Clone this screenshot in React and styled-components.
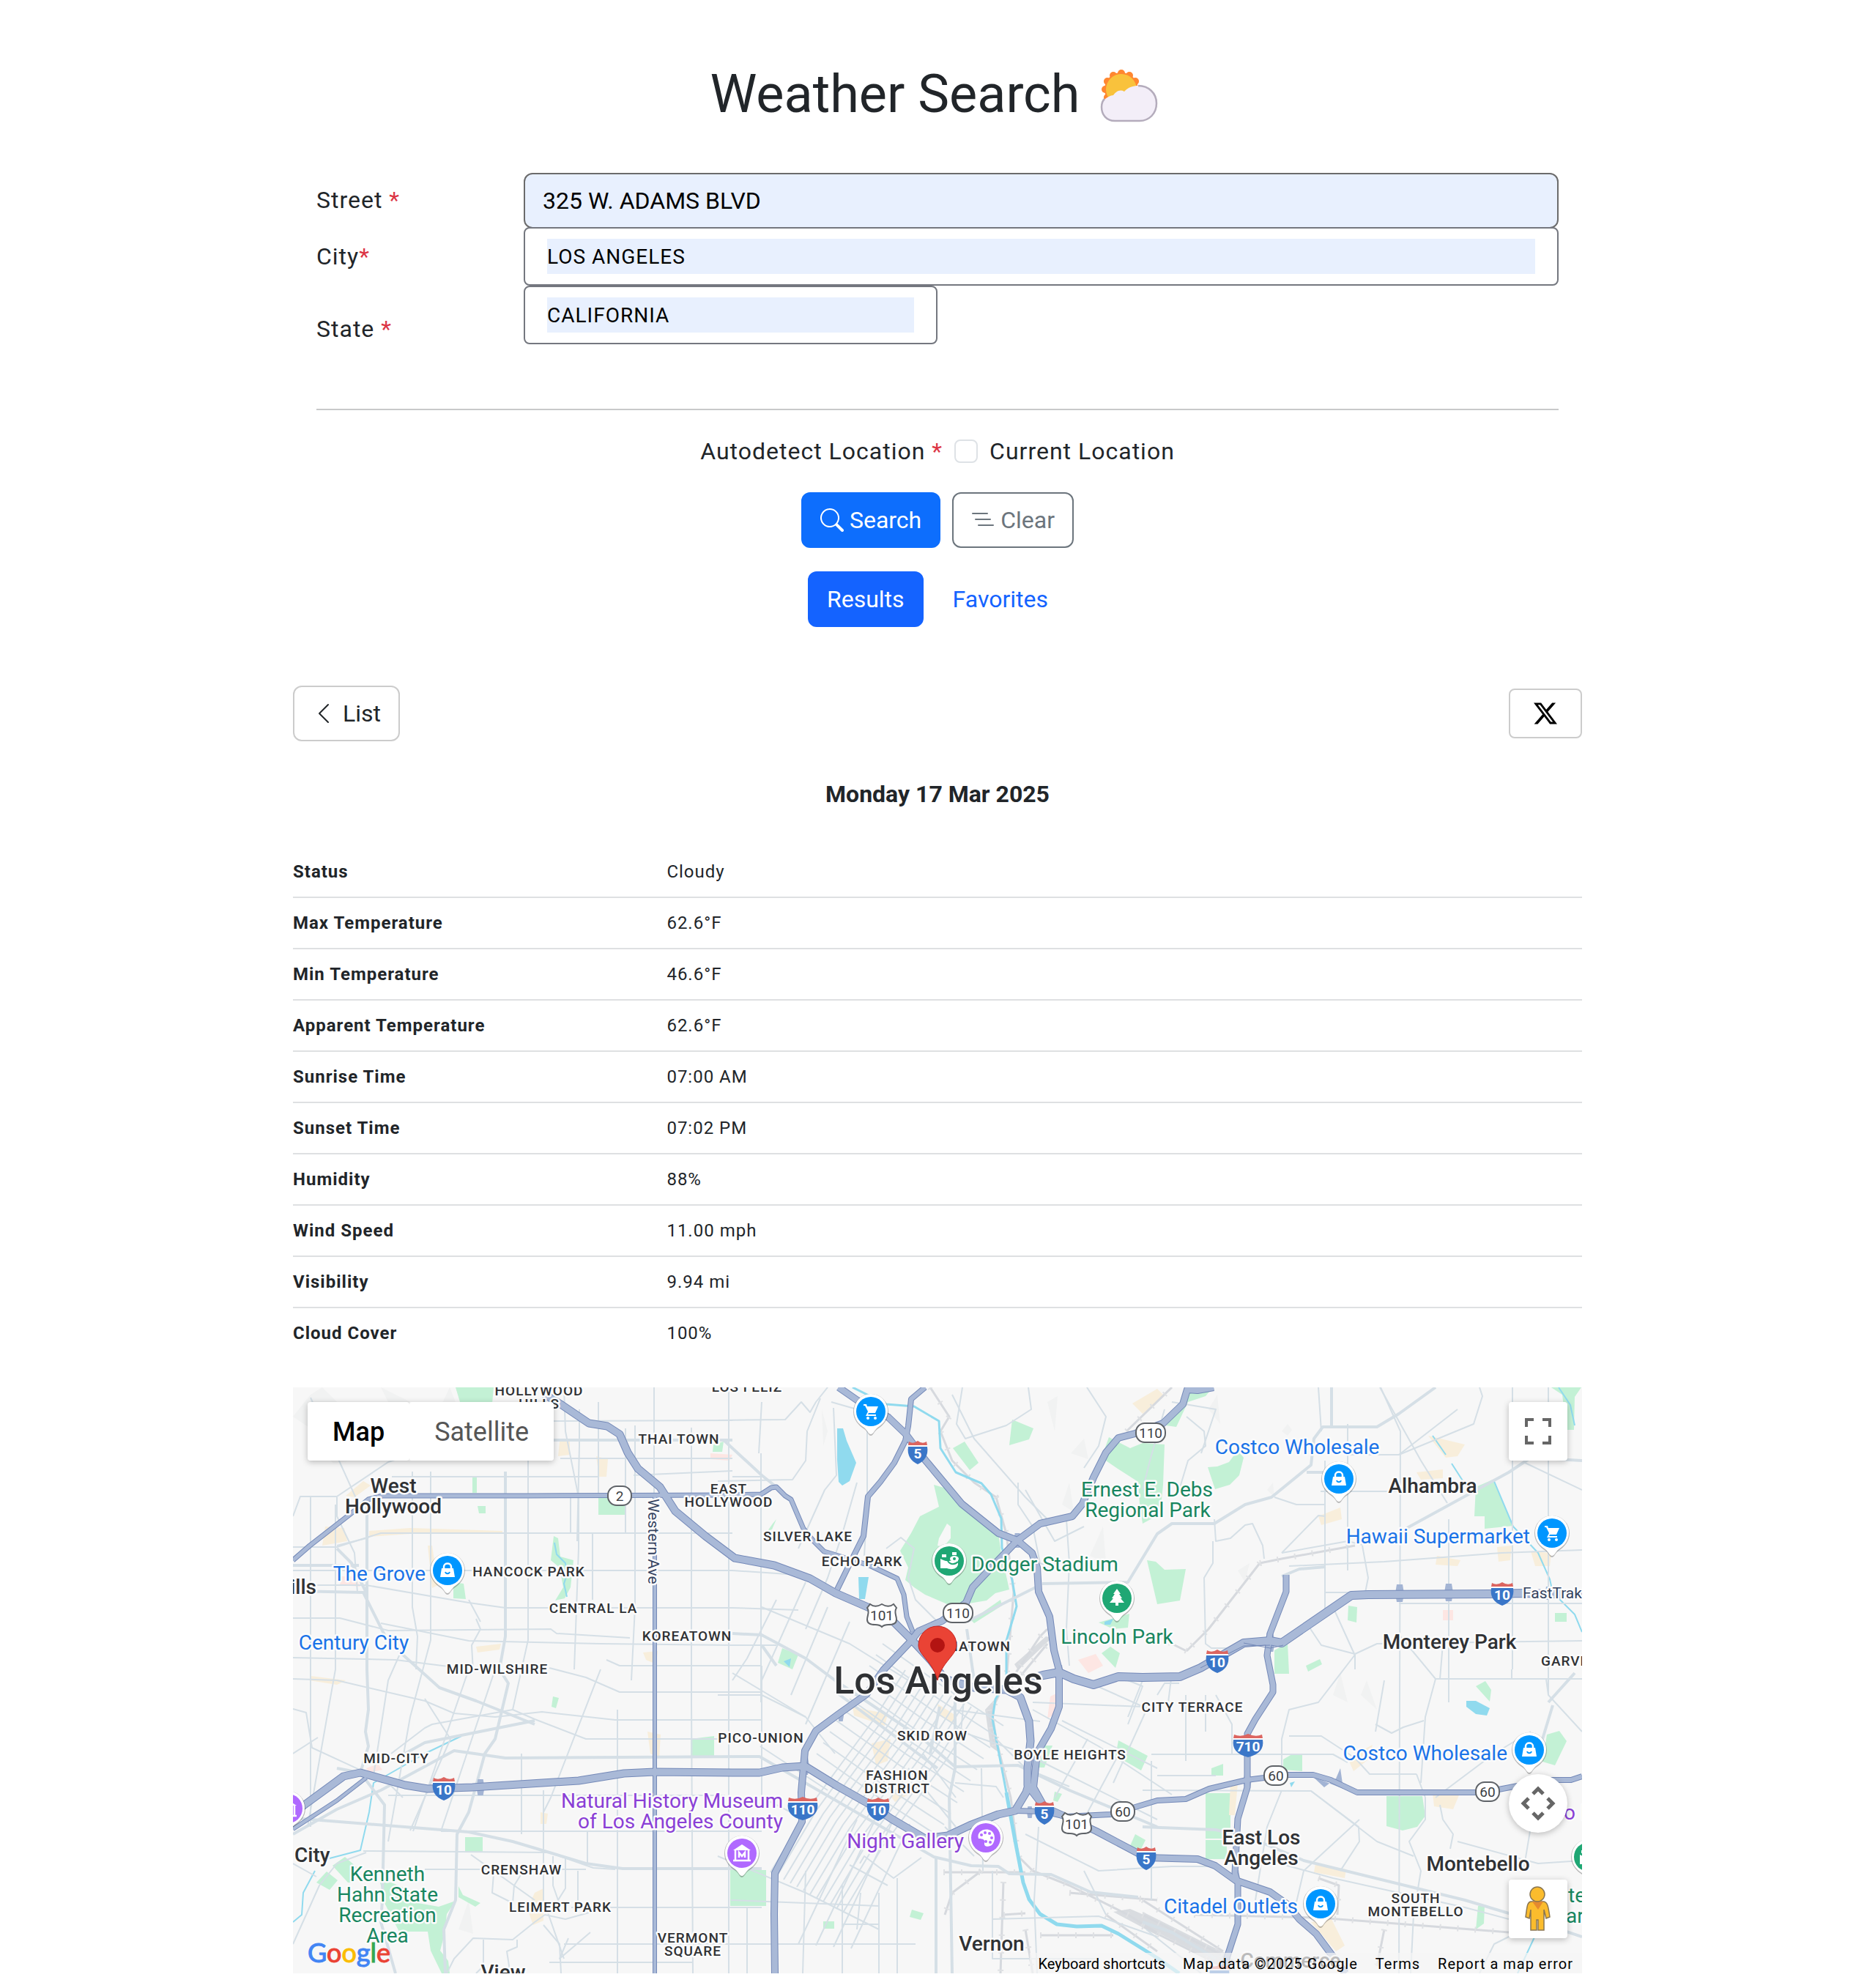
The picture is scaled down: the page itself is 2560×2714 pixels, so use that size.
import React from "react";
import styled, { createGlobalStyle } from "styled-components";
import { BsSearch, BsListNested, BsChevronLeft, BsTwitterX } from "react-icons/bs";

const GlobalStyle = createGlobalStyle`
  *, *::before, *::after { box-sizing: border-box; }
  body {
    margin: 0;
    background: #fff;
    color: #212529;
    font-family: Roboto, "Liberation Sans", sans-serif;
    font-size: 32px;
    line-height: 48px;
  }
  input, button { font-family: inherit; }
`;

const Page = styled.main`
  max-width: 1760px;
  margin: 0 auto;
  padding: 86px 0 20px;
`;

const Title = styled.h1`
  display: flex;
  align-items: center;
  justify-content: center;
  gap: 28px;
  margin: 0 0 64px;
  font-size: 72px;
  line-height: 86px;
  font-weight: 400;
`;

const Form = styled.form`
  padding: 0 32px;
`;

const FieldRow = styled.div`
  display: grid;
  grid-template-columns: 283px 1fr;
  align-items: center;
  min-height: ${(p) => p.$height};
`;

const FieldLabel = styled.label`
  letter-spacing: 1px;
`;

const Star = styled.span`
  color: #dc3545;
`;

const StreetInput = styled.input`
  width: 100%;
  height: 76px;
  margin-bottom: -2px;
  padding: 0 24px;
  border: 2px solid #6b6b6b;
  border-radius: 12px;
  background: #e8f0fe;
  color: #000;
  font-size: 32px;
  line-height: 48px;
`;

const Outline = styled.div`
  align-self: start;
  position: relative;
  width: ${(p) => p.$width};
  padding: 14px 30px;
  border: 2px solid #74777f;
  border-radius: 8px;
  background: #fff;
`;

const OutlineInput = styled.input`
  display: block;
  width: 100%;
  height: 48px;
  padding: 0;
  border: 0;
  background: #e8f0fe;
  color: #000;
  font-size: 28px;
  letter-spacing: 1px;
`;

const Divider = styled.hr`
  margin: 50px 0 32px;
  border: 0;
  border-top: 2px solid #c8c9ca;
`;

const CenterRow = styled.div`
  display: flex;
  align-items: center;
  justify-content: center;
  gap: ${(p) => p.$gap};
  margin-bottom: ${(p) => p.$after};
`;

const Check = styled.input`
  appearance: none;
  width: 32px;
  height: 32px;
  margin: 0;
  border: 2px solid #dee2e6;
  border-radius: 8px;
  background: #fff;
`;

const tones = {
  primary: { back: "#0d6efd", edge: "#0d6efd", text: "#fff", gap: "8px" },
  outline: { back: "#fff", edge: "#6c757d", text: "#6c757d", gap: "8px" },
  active: { back: "#1463ff", edge: "#1463ff", text: "#fff", gap: "8px" },
  link: { back: "transparent", edge: "transparent", text: "#1463ff", gap: "8px" },
  light: { back: "#fff", edge: "#ccc", text: "#212529", gap: "10px" },
};

const Button = styled.button`
  display: inline-flex;
  align-items: center;
  gap: ${(p) => tones[p.$tone].gap};
  height: 76px;
  padding: 0 24px;
  border: 2px solid ${(p) => tones[p.$tone].edge};
  border-radius: 12px;
  background: ${(p) => tones[p.$tone].back};
  color: ${(p) => tones[p.$tone].text};
  font-size: 32px;
  line-height: 48px;
`;

const DetailBar = styled.div`
  display: flex;
  align-items: center;
  justify-content: space-between;
`;

const ShareLink = styled.a`
  display: flex;
  align-items: center;
  justify-content: center;
  width: 100px;
  height: 68px;
  border: 2px solid #ccc;
  border-radius: 8px;
  color: #000;
`;

const DateHeading = styled.h2`
  margin: 48px 0;
  font-size: 32px;
  line-height: 48px;
  font-weight: 700;
  text-align: center;
`;

const Table = styled.table`
  width: 100%;
  margin-bottom: 38px;
  border-collapse: separate;
  border-spacing: 0;
  font-size: 24px;
  line-height: 36px;
  letter-spacing: 1px;
  text-align: left;

  th, td {
    padding: 16px 0;
    border-bottom: 2px solid #dee0e2;
  }
  th { width: 29%; font-weight: 700; }
  tr:last-child th, tr:last-child td { border-color: transparent; }
`;

const MapFrame = styled.section`
  position: relative;
  height: 800px;
  overflow: hidden;
  background: #f7f7f7;
`;

const MapCanvas = styled.svg`
  display: block;
  width: 100%;
  height: 100%;
  font-family: Roboto, "Liberation Sans", sans-serif;
`;

const TypeSwitch = styled.div`
  position: absolute;
  top: 20px;
  left: 20px;
  display: flex;
  border-radius: 4px;
  box-shadow: 0 2px 8px rgba(0, 0, 0, 0.25);
`;

const TypeButton = styled.button`
  height: 80px;
  padding: 2px 34px 0;
  border: 0;
  border-radius: 4px;
  background: #fff;
  box-shadow: ${(p) => (p.$on ? "1px 0 2px rgba(0, 0, 0, 0.1)" : "none")};
  color: ${(p) => (p.$on ? "#000" : "#565656")};
  font-size: 36px;
  font-weight: ${(p) => (p.$on ? 500 : 400)};
`;

const MapButton = styled.button`
  position: absolute;
  right: 20px;
  ${(p) => p.$edge}: ${(p) => p.$offset};
  display: flex;
  align-items: center;
  justify-content: center;
  width: 80px;
  height: 80px;
  padding: 0;
  border: 0;
  border-radius: ${(p) => (p.$round ? "50%" : "4px")};
  background: #fff;
  box-shadow: 0 2px 8px rgba(0, 0, 0, 0.25);
`;

const GoogleMark = styled.a`
  position: absolute;
  left: 20px;
  bottom: 5px;
  font-family: Lato, Roboto, sans-serif;
  font-size: 36px;
  line-height: 48px;
  text-decoration: none;
  -webkit-text-stroke: 1px currentColor;
`;

const MarkLetter = styled.span`
  color: ${(p) => p.$color};
`;

const Legal = styled.footer`
  position: absolute;
  right: 0;
  bottom: 0;
  display: flex;
  gap: 24px;
  height: 28px;
  padding: 0 12px;
  background: rgba(245, 245, 245, 0.7);
  color: #000;
  font-size: 20px;
  line-height: 30px;
  letter-spacing: 1px;
`;

const LegalLink = styled.a`
  color: inherit;
  text-decoration: none;
`;

const ShortcutButton = styled.button`
  padding: 0;
  border: 0;
  background: none;
  color: inherit;
  font-size: 20px;
  line-height: 30px;
`;

function CloudSun() {
  return (
    <svg width="88" height="80" viewBox="2 -2 88 80" aria-hidden="true">
      <g fill="#ff8730">
        <circle cx="31" cy="31" r="23" />
        {Array.from({ length: 12 }, (_, i) => {
          const a = (i * Math.PI) / 6;
          return <circle key={i} cx={31 + 22 * Math.cos(a)} cy={31 + 22 * Math.sin(a)} r="5" />;
        })}
      </g>
      <circle cx="31" cy="31" r="21" fill="#f9c23c" />
      <path
        d="M22 74 C11 74 4 66 4 55 C4 46 12 40 20 39 C24 33 30 31 35 34 C40 28 48 26 54 26 C68 26 79 36 79 50 C79 64 69 74 56 74 Z"
        fill="#f3eef8"
      />
      <path
        d="M8 44 C5 47 4 51 4 55 C4 66 11 74 22 74 H56 C69 74 79 64 79 50 C79 36 68 26 54 26"
        fill="none"
        stroke="#b4acbc"
        strokeWidth="2.5"
      />
    </svg>
  );
}

const parks = [
  "875,133 892,138 924,169 963,199 967,226 978,276 959,281 947,291 917,296 898,298 863,283 848,273 836,263 840,246 829,223 844,199 856,176 882,163",
  "1114,68 1143,83 1160,76 1190,78 1188,133 1184,173 1160,186 1156,160 1154,129 1123,109 1104,96",
  "1249,109 1262,108 1278,102 1290,86 1298,96 1292,120 1279,133 1259,139",
  "1166,236 1178,238 1190,249 1219,248 1211,291 1180,296",
  "1615,136 1638,126 1666,189 1627,193 1627,176 1613,176",
  "1718,0 1759,0 1750,13 1749,58 1739,58 1733,10",
  "1340,359 1358,349 1360,391 1340,391",
  "1441,298 1453,300 1452,321 1440,318",
  "1723,308 1739,308 1739,320 1723,320",
  "1383,380 1402,371 1405,378 1386,388",
  "1246,554 1280,554 1280,616 1246,616",
  "1246,618 1275,618 1275,644 1246,644",
  "1493,558 1542,558 1546,585 1535,600 1515,605 1493,599",
  "1712,474 1729,469 1739,483 1723,516 1706,511",
  "1352,508 1362,502 1378,502 1378,524 1352,522",
  "1615,408 1628,401 1636,413 1634,429",
  "1254,520 1270,514 1270,530 1254,530",
  "1615,740 1618,708 1627,708 1626,732",
  "119,676 134,676 159,686 165,703 199,709 222,701 210,719 207,746 201,769 212,783 214,800 203,800 188,769 184,743 145,743 126,706",
  "54,653 71,641 88,656 84,676 75,676",
  "32,676 46,661 61,673 50,686",
  "226,681 232,693 256,704 249,709 226,696",
  "235,614 259,614 259,634 235,634",
  "597,659 646,659 646,708 597,708",
  "724,729 739,729 739,739 724,739",
  "845,713 861,718 857,727 842,723",
  "543,480 575,476 575,503 543,503",
  "355,422 363,424 359,438 353,436",
  "1127,482 1167,503 1158,523 1123,503",
  "1026,489 1037,489 1026,519 1018,519",
  "222,0 274,0 272,22 228,20",
  "356,203 362,206 365,231 383,236 379,273 371,288 358,291 369,273 364,246 352,236",
  "417,151 454,151 454,174 417,174",
  "245,123 251,123 251,144 245,144",
  "252,162 263,162 263,172 254,172",
  "219,266 233,268 236,289 219,288",
  "982,44 1011,56 1005,71 978,79",
  "901,83 917,74 936,103 924,113",
  "1100,321 1142,309 1140,328 1120,330",
  "668,356 690,365 682,385 662,376",
  "1104,363 1116,354 1129,363 1123,383",
  "655,186 660,180 654,194 648,196",
  "574,78 588,74 586,88 573,88",
  "1040,552 1050,555 1044,566 1038,564",
  "1150,610 1164,618 1156,634 1142,628",
  "50,196 57,194 58,212 51,212",
  "1220,8 1256,0 1246,12 1222,20 1206,54 1192,52 1212,30",
  "926,318 966,290 968,298 930,322",
];

const shops = [
  "72,148 96,128 106,134 84,150",
  "44,190 70,192 74,210 40,216",
  "104,196 160,192 286,196 286,200 160,200 104,204",
  "364,74 378,70 378,92 362,94",
  "414,94 430,98 428,122 418,122",
  "184,216 190,216 198,270 190,274",
  "478,362 498,360 496,378 482,372",
  "250,354 284,350 282,358 252,362",
  "1550,66 1600,78 1590,94 1574,96",
  "1534,116 1570,112 1570,124 1540,126",
  "1400,176 1430,164 1432,180 1404,188",
  "1562,230 1594,236 1590,244 1560,242",
  "1690,224 1718,226 1716,244 1696,244",
  "1644,218 1664,216 1662,236 1646,238",
  "764,436 812,446 808,462 766,448",
  "790,486 816,480 812,510 796,516",
  "816,558 834,546 840,556 822,566",
  "880,432 902,446 906,462 882,448",
  "1440,506 1474,488 1468,508 1448,524",
  "1556,554 1594,552 1584,576 1558,572",
  "1396,650 1438,658 1436,670 1394,662",
  "1390,730 1418,726 1436,762 1424,770",
  "330,690 342,684 342,728 328,734 320,712",
  "484,470 502,474 500,506 488,500",
  "24,394 72,400 60,406 22,400",
  "1146,22 1180,2 1190,12 1160,36",
  "1280,540 1290,540 1286,584 1278,584",
  "338,580 348,582 346,596 338,596",
];

const blush = [
  "66,258 84,258 92,272 64,270",
  "1034,422 1042,418 1044,444 1030,452",
  "1072,372 1096,364 1106,380 1086,390",
  "570,90 600,92 596,100 570,98",
  "1570,304 1584,304 1584,318 1570,318",
  "100,520 116,514 122,522 104,526",
];

const hills = [
  "0,40 24,10 40,0 60,20 30,60", "40,90 60,60 80,100 56,104", "120,0 160,20 140,40", "200,30 214,0 222,20",
  "1030,20 1044,12 1040,60", "1062,90 1080,70 1086,98", "1088,230 1106,190 1110,240", "1250,30 1262,10 1266,50",
  "1290,250 1306,240 1300,266", "1330,140 1338,130 1340,150", "722,30 730,60 724,80", "1350,60 1358,50 1364,58 1358,66",
  "1458,420 1466,400 1480,440", "1420,420 1430,390 1440,430", "226,740 240,700 246,746", "1050,160 1060,130 1066,170",
];

const lakes = [
  "743,56 751,56 756,73 769,103 760,128 750,134 745,129 743,99",
  "772,259 786,259 781,289 773,289",
  "1602,428 1615,428 1634,438 1630,448 1615,446 1602,436",
  "1361,540 1368,538 1363,546",
  "1108,320 1120,316 1116,324 1108,324",
  "670,374 680,370 678,382",
];

const minorRoads = [
  "24,150 24,600", "60,150 60,176 84,226 88,280", "58,160 58,385 50,430 20,600", "163,115 163,300 170,340 168,385", "188,115 188,345 160,450 130,620",
  "321,100 321,345 300,440", "379,150 379,199", "370,0 372,60 390,150 390,220 384,385", "391,30 391,80 388,210", "417,20 417,151",
  "454,56 454,199", "467,52 467,300 462,400", "409,200 409,290", "493,0 493,147", "544,55 544,430 546,800", "595,0 595,800", "639,90 639,430",
  "443,440 443,800", "312,500 312,610", "342,550 342,700 370,780", "402,606 402,650", "389,660 389,712", "24,14 90,160",
  "0,176 10,149 60,149 130,102 160,92", "350,46 600,45", "135,122 417,122", "365,97 600,97", "465,120 600,114", "0,218 60,218 120,199 600,199",
  "60,216 100,206 104,204", "0,250 600,250 690,256", "0,270 100,270 240,294 290,301 600,301 690,304", "0,315 64,315 130,332 352,330 360,336 460,342",
  "120,322 240,346 420,350 600,352 660,352", "0,369 140,372 220,382", "428,372 446,380 640,380", "0,398 60,400 180,428 220,445 276,450 340,443 440,454 640,454",
  "350,383 400,396 446,416 640,416", "180,425 215,480 160,605", "240,385 164,606", "276,385 202,606", "420,385 352,560 342,580",
  "0,439 18,444 26,492 130,540 150,560", "130,557 590,557", "202,606 640,606", "96,633 350,635 410,656 440,658", "100,635 60,650 36,680 0,760",
  "180,658 320,658 400,658", "243,638 330,700", "274,664 272,690 300,704", "300,704 302,680 312,664", "380,710 640,710", "210,800 220,780 246,752 300,754 330,730 344,720 372,726 408,716",
  "355,640 355,680 362,700 372,684 372,640", "342,734 364,760 366,800", "370,760 600,760 850,760", "350,785 545,785", "260,754 260,790 250,800", "306,754 306,764 292,770 296,796",
  "250,316 256,330 244,352 246,388", "240,290 256,320", "150,355 130,400 110,530", "0,500 34,478", "0,650 32,668",
  "134,500 180,465 190,460 300,440 330,453 400,480 640,480", "406,744 364,780 376,752", "620,710 620,800", "640,380 640,560 700,590", "638,490 730,550",
  "580,45 672,44 694,20 706,34 714,20 730,0", "580,128 682,126 700,100 702,60 720,15", "735,20 770,30", "738,28 742,120 726,140 690,220", "784,30 784,160 780,230",
  "770,130 750,200 730,260 700,330", "640,300 760,350 840,400", "660,290 620,370 600,400", "700,266 640,400", "730,300 680,420", "760,320 700,460", "600,390 700,450 740,500",
  "580,420 640,420 700,450", "810,220 830,205 848,220 840,260 850,290 880,320", "900,10 930,70 1000,150 1030,180", "914,0 906,50 918,70 974,52 1008,30 1004,0",
  "1084,0 1110,40 1100,80 1080,110", "990,130 990,160 1010,190 1020,240 1050,250", "1000,140 1040,210 1080,190", "1056,180 1060,240 1056,330 1060,380",
  "1190,30 1170,100 1160,140", "1200,20 1260,30 1240,90", "1220,40 1244,60 1246,80 1222,100 1210,140", "1400,0 1404,60", "1485,0 1512,60 1510,800",
  "1409,100 1409,310", "1440,50 1440,250", "1578,180 1578,430", "1665,0 1665,385", "1714,0 1714,420", "1510,92 1440,92", "1403,142 1510,142",
  "1484,0 1540,100 1576,158", "1620,0 1624,12 1612,50 1510,92", "1760,140 1680,102", "1510,92 1590,30", "1410,160 1370,160 1340,150",
  "1258,180 1260,210 1280,206 1300,188 1310,186 1324,216 1326,234", "1350,226 1400,175 1410,176", "1350,226 1440,210 1460,215", "1256,210 1256,240 1244,260 1246,350 1254,356 1290,356",
  "1460,216 1468,260 1464,280", "1410,280 1450,280", "1510,295 1760,295", "1360,244 1490,238 1650,226 1760,222", "1420,300 1450,366 1450,385",
  "1386,325 1404,352 1450,364 1480,350 1760,346", "1560,398 1760,398", "1512,340 1560,398 1546,450 1540,540", "1664,385 1664,398", "1711,398 1714,420 1760,470",
  "1450,365 1400,430 1360,440 1350,480 1350,530", "1478,470 1490,400", "1478,460 1500,472 1516,464 1544,455", "1360,476 1404,476 1450,506 1470,528 1534,528",
  "1172,501 1420,501 1440,512", "1219,420 1219,510", "1246,420 1246,470", "1260,420 1282,460 1282,500", "1172,510 1172,700", "1180,530 1260,530",
  "1160,550 1390,551 1480,620 1530,640", "1534,528 1546,560 1546,590 1524,620 1540,660 1530,720 1526,800", "1390,551 1455,600 1456,620 1430,660", "1350,550 1330,600 1314,700",
  "1456,590 1380,660 1366,720", "1310,640 1420,670 1600,710 1660,726", "1590,620 1700,650 1760,646", "1566,570 1570,590 1584,610 1580,630", "1560,560 1640,500 1690,470",
  "1690,600 1680,660", "1160,400 1140,450", "1200,390 1195,430", "1080,400 1170,440", "1130,396 1160,408 1140,460", "1680,740 1640,760 1620,800",
  "900,440 1020,456", "918,405 912,470 1000,500 1060,530 1180,590", "960,480 1000,520 1060,545", "1050,455 1180,520", "1010,440 1100,490 1200,556",
  "1085,480 1040,560", "1128,500 1085,580", "1170,430 1120,540", "1000,610 1100,660 1200,654 1260,654", "1010,430 1160,436",
  "904,540 960,545 970,560", "940,520 942,660", "1018,600 1012,700 1016,800", "955,660 955,780 1100,780", "955,726 1100,722 1180,750",
  "580,640 700,690 800,740", "700,660 696,800", "750,680 750,800", "800,690 800,800", "825,670 825,800", "775,690 770,740", "598,700 800,708", "750,733 800,733",
  "774,650 780,640 820,670 858,642", "760,652 812,680", "840,520 905,600", "860,500 905,560", "890,600 930,640", "1080,660 1100,700 1110,720",
  "1180,420 1190,404 1210,404", "1570,350 1566,398", "1165,740 1240,800", "640,20 636,90", "600,122 640,122",
];

const majorRoads = [
  "101,153 101,385 103,440 99,470 103,490 92,526 125,570 122,700 120,730 140,800", "290,115 290,340 282,385 294,404 276,480 262,500 240,580 224,610 222,700 206,740 208,800",
  "356,72 600,72", "0,243 90,243", "0,278 96,280 126,340 150,365 200,410 250,428 330,460", "60,220 80,240 100,280", "92,526 60,520",
  "0,610 60,576 120,550 220,496 290,506 637,504 875,641 926,653 963,654 978,664 1035,665 1089,689 1154,696", "153,500 180,485 330,455",
  "0,588 240,607 300,620 400,650 450,657 640,657", "588,72 640,120 660,136", "600,336 640,338 700,370 740,400 860,480 904,518", "904,400 904,520 896,560 900,800", "878,640 878,800",
  "904,518 990,516 1060,550 1180,600", "1023,268 1140,266 1180,200 1200,186 1258,186 1300,160 1336,150 1390,106 1394,70 1406,54 1480,54 1510,36 1560,0",
  "1418,0 1418,54", "1384,116 1408,116", "1510,198 1660,116 1690,96 1760,100", "1350,258 1374,248 1410,245", "1160,600 1260,604 1310,616 1380,646 1600,700 1700,730 1760,750",
  "1160,730 1200,744 1260,780", "1714,430 1750,390", "1720,434 1700,500", "883,436 870,500", "740,415 880,520", "920,330 930,400", "640,352 660,380", "920,320 1020,270",
];

const rails = [
  "870,0 896,40 884,60 900,100 930,130 960,150 974,200 984,280 974,400 954,440 960,480 980,560 990,640 1010,660 1060,680 1140,720 1180,745",
  "950,440 958,490", "1138,60 1200,0", "1320,240 1350,234 1450,216", "1320,240 1250,330 1220,360", "1220,360 1190,345",
  "940,660 900,690 890,720", "888,662 1000,662", "970,675 966,800", "970,720 1000,718", "1000,740 1010,800", "1020,748 1120,748",
  "1160,720 1290,786", "1160,700 1270,770", "1160,736 1280,796", "1230,720 1400,724 1480,730 1660,744", "1400,670 1428,680 1426,720", "1490,740 1480,790",
  "980,400 1020,340 1030,330", "980,410 1030,350", "1060,690 1180,700", "1110,720 1180,770",
];

const yards = [
  "945,440 958,426 956,470 966,500 952,490",
  "1143,712 1180,728 1180,748 1120,716",
  "1160,716 1280,776 1270,790 1160,734",
  "985,378 1028,340 1036,342 990,386",
];

const motorways = [
  { w: 7, p: "0,236 23,216 77,174 103,153 122,148 321,148 600,147 639,146 653,137 660,136 672,148 680,153 697,193 710,209 725,224 787,243 825,261 834,283 838,313 846,333" },
  { w: 6, p: "494,147 494,800" },
  { w: 6, p: "0,603 60,564 100,533" },
  { w: 8, p: "863,0 844,16 840,53 836,73 821,103 802,129 785,149 779,203 764,233 743,276" },
  { w: 11, p: "343,9 367,24 404,49 429,53 446,64 457,89 471,111 501,136 522,169 563,203 603,233 657,243 706,261 741,281 787,301 821,321 846,346 871,373 890,398 930,410 974,413 993,423 1005,456 1007,483 1003,519 1003,543 1026,573" },
  { w: 10, p: "745,0 771,18 813,41 836,63 863,99 913,159 963,199 989,209 1009,226 1016,246 1018,279 1033,313 1039,359 1046,386 1046,436 1035,466 1016,499 1011,546 1026,573 1055,586 1097,606 1165,642 1235,644 1259,653 1287,673 1334,689 1358,706 1374,726 1397,746 1437,800" },
  { w: 10, p: "1257,0 1235,4 1221,3 1215,23 1188,49 1150,63 1127,69 1110,89 1093,123 1078,159 1064,176 1020,186 989,209 963,236 928,273 919,294 886,319 854,333 844,346 806,386 783,419 745,446 714,469 699,496 697,519 694,553 695,593 676,629 658,663 657,719 658,800" },
  { w: 11, p: "0,582 17,569 69,531 92,526 153,543 184,548 245,546 390,537 452,527 494,525 600,526 637,526 668,519 699,517 741,543 787,569 817,589 863,616 894,612 924,598 963,583 986,578 1001,553 1005,540" },
  { w: 8, p: "986,578 1026,579 1055,586 1116,583 1150,573 1180,564 1219,562 1251,548 1302,536 1358,529 1393,529 1417,536 1453,553 1615,553 1646,549 1714,536 1745,536 1760,531" },
  { w: 12, p: "1000,400 1024,393 1046,389 1066,398 1093,406 1127,395 1160,396 1211,395 1239,383 1298,349 1334,346 1350,349 1445,284 1468,283 1634,282 1682,281 1760,283" },
  { w: 9, p: "1356,256 1356,279 1334,336 1330,366 1338,406 1338,416 1314,453 1303,473 1303,546 1290,589 1286,663 1290,676 1290,733 1275,779 1270,800" },
];

const junctions = [
  [256, 546, 11], [1511, 281, 12], [1578, 280, 12], [1714, 281, 9], [1303, 538, 11], [699, 517, 12], [1288, 668, 9], [1046, 391, 12], [1334, 348, 13], [989, 209, 10], [846, 342, 10], [748, 448, 8], [1006, 580, 8],
];

const river =
  "764,0 810,23 848,26 882,46 884,83 905,116 940,131 953,146 967,179 968,219 982,263 988,299 974,346 974,400 959,426 955,453 974,553";
const lowerRiver = "974,553 986,619 997,676 1005,699 1020,719 1043,733 1070,736 1104,735 1127,746 1180,779 1210,800";

const creeks = [
  "1728,0 1744,24 1750,52", "1556,66 1574,92", "1582,104 1600,132", "1639,126 1666,190 1700,226 1716,262 1720,280 1750,310 1760,334",
  "357,212 360,228 372,240 374,256 370,268 374,286", "50,643 92,632 104,580 110,540 180,500 230,476", "0,730 12,720 14,690 30,660", "1672,800 1700,740 1720,710",
];

const labelStyles = {
  place: { size: 28, weight: 500, fill: "#2f3134" },
  metro: { size: 52, weight: 500, fill: "#2f3134" },
  area: { size: 19, weight: 500, fill: "#2f3134", spacing: 1 },
  shop: { size: 28, weight: 400, fill: "#1a73e8" },
  park: { size: 28, weight: 400, fill: "#188660" },
  art: { size: 28, weight: 400, fill: "#8a3fd6" },
  road: { size: 21, weight: 400, fill: "#35435f" },
};

const labels = [
  ["area", "HOLLYWOOD", 336, 11], ["area", "HILLS", 336, 29], ["area", "LOS FELIZ", 620, 6], ["area", "THAI TOWN", 527, 77],
  ["place", "West", 137, 144], ["place", "Hollywood", 137, 172], ["area", "EAST", 595, 145], ["area", "HOLLYWOOD", 595, 163],
  ["area", "SILVER LAKE", 703, 210], ["area", "ECHO PARK", 777, 244], ["shop", "The Grove", 181, 264, "end"], ["area", "HANCOCK PARK", 322, 258],
  ["area", "CENTRAL LA", 410, 308], ["area", "KOREATOWN", 538, 346], ["area", "MID-WILSHIRE", 279, 391], ["place", "ills", 32, 282, "end"],
  ["shop", "Century City", 83, 358], ["park", "Dodger Stadium", 926, 251, "start"], ["park", "Lincoln Park", 1125, 350],
  ["park", "Ernest E. Debs", 1166, 149], ["park", "Regional Park", 1167, 177], ["shop", "Costco Wholesale", 1371, 91], ["place", "Alhambra", 1556, 144],
  ["shop", "Hawaii Supermarket", 1689, 213, "end"], ["road", "FastTrak", 1679, 288, "start"], ["place", "Monterey Park", 1579, 357], ["area", "GARVEY", 1704, 380, "start"],
  ["area", "CHINATOWN", 980, 360, "end"], ["metro", "Los Angeles", 881, 418], ["area", "MID-CITY", 141, 513], ["area", "PICO-UNION", 639, 485],
  ["area", "SKID ROW", 873, 482], ["area", "FASHION", 825, 536], ["area", "DISTRICT", 825, 554], ["area", "BOYLE HEIGHTS", 1061, 508], ["area", "CITY TERRACE", 1228, 443],
  ["art", "Natural History Museum", 669, 574, "end"], ["art", "of Los Angeles County", 669, 602, "end"], ["art", "Night Gallery", 916, 629, "end"],
  ["place", "East Los", 1322, 624], ["place", "Angeles", 1322, 652], ["shop", "Costco Wholesale", 1658, 509, "end"], ["place", "Montebello", 1618, 660],
  ["shop", "Citadel Outlets", 1372, 718, "end"], ["area", "SOUTH", 1533, 704], ["area", "MONTEBELLO", 1533, 722], ["place", "Commerce", 1362, 792],
  ["place", "Vernon", 954, 769], ["place", "City", 2, 648, "start"], ["area", "CRENSHAW", 312, 665], ["area", "LEIMERT PARK", 365, 716],
  ["area", "VERMONT", 546, 758], ["area", "SQUARE", 546, 776], ["place", "View", 287, 808], ["park", "Kenneth", 129, 674], ["park", "Hahn State", 129, 702],
  ["park", "Recreation", 129, 730], ["park", "Area", 129, 758], ["art", "o P", 1735, 590, "start"], ["park", "te", 1741, 703, "start"], ["park", "ard", 1738, 731, "start"],
];

const pins = [
  ["bag", 211, 250], ["cart", 789, 33], ["stadium", 896, 237], ["tree", 1125, 288], ["bag", 1428, 125], ["cart", 1719, 199], ["museum", 613, 636],
  ["palette", 946, 615], ["bag", 1688, 495], ["bag", 1403, 705], ["museum", -7, 575], ["golf", 1769, 641],
];

const pinFill = { bag: "#0096ff", cart: "#0096ff", stadium: "#1fa774", tree: "#1fa774", golf: "#1fa774", museum: "#b069ff", palette: "#b069ff" };

function PinGlyph({ kind }) {
  if (kind === "bag")
    return (
      <g>
        <path d="M-8 -3 H8 L10 9 H-10 Z" fill="#fff" />
        <path d="M-5 -2 V-5 C-5 -11 5 -11 5 -5 V-2" fill="none" stroke="#fff" strokeWidth="2.5" />
        <path d="M-3 2 C-2 5 2 5 3 2" fill="none" stroke="#0096ff" strokeWidth="2" />
      </g>
    );
  if (kind === "cart")
    return (
      <g fill="#fff">
        <path d="M-10 -10 H-6 L-5 -7 H10 L6 2 H-3 L-4 4 H7 V6 H-7 L-4 0 L-8 -8 H-10 Z" />
        <circle cx="-4" cy="9" r="2" />
        <circle cx="6" cy="9" r="2" />
      </g>
    );
  if (kind === "tree") return <path d="M0 -13 L5 -6 H3 L7 0 H5 L10 6 H2 V10 H-2 V6 H-10 L-5 0 H-7 L-3 -6 H-5 Z" fill="#fff" />;
  if (kind === "museum")
    return (
      <g fill="none" stroke="#fff" strokeWidth="2.5">
        <path d="M-12 -4 L0 -12 L12 -4 Z" fill="#fff" stroke="none" />
        <path d="M-9 -4 V9 M9 -4 V9 M-12 10 H12" />
        <path d="M-4 6 V-1 L0 4 L4 -1 V6" />
      </g>
    );
  if (kind === "palette")
    return (
      <g>
        <path d="M-10 1 C-13 -8 -3 -13 4 -11 C13 -9 14 3 9 9 C5 13 -3 13 -2 7 C-1 3 -3 1 -10 1 Z" fill="#fff" />
        {[[-6, -4], [-1, -7], [5, -6], [8, 0], [6, 6], [0, 5]].map(([x, y]) => (
          <circle key={`${x}${y}`} cx={x} cy={y} r="2" fill="#b069ff" />
        ))}
      </g>
    );
  return (
    <g>
      <path d="M-12 -3 C-8 -1 -4 1 0 0 L12 -2 V5 C10 12 2 12 -3 10 H-12 Z" fill="#fff" />
      <ellipse cx="7" cy="-3" rx="6" ry="4" fill="#fff" />
      <path d="M-10 -9 H-4 V-5 H-10 Z M4 -12 H10 V-8 H4 Z" fill="#fff" />
      <path d="M-2 0 C2 6 8 5 12 1" fill="none" stroke="#1fa774" strokeWidth="2" />
      <circle cx="7" cy="-3" r="2" fill="#1fa774" />
    </g>
  );
}

function Pin({ kind, x, y }) {
  return (
    <g transform={`translate(${x} ${y})`}>
      <path d="M0 33 C-3 33 -4 28 -9 24 C-17 19 -24 11 -24 0 A24 24 0 0 1 24 0 C24 11 17 19 9 24 C4 28 3 33 0 33 Z" fill="#000" opacity="0.25" />
      <path d="M0 31 C-3 31 -4 27 -9 22 C-17 17 -23 10 -23 -1 A23 23 0 0 1 23 -1 C23 10 17 17 9 22 C4 27 3 31 0 31 Z" fill="#fff" />
      <circle r="20" fill={pinFill[kind]} />
      <PinGlyph kind={kind} />
    </g>
  );
}

const interstates = [
  ["10", 206, 548], ["110", 696, 575], ["10", 799, 576], ["5", 1026, 581], ["5", 1165, 643], ["10", 1651, 282], ["10", 1262, 374], ["5", 853, 89], ["710", 1304, 489],
];

function Interstate({ name, x, y }) {
  const h = name.length > 2 ? 20 : name.length > 1 ? 15 : 13;
  return (
    <g transform={`translate(${x} ${y})`}>
      <path d={`M${-h} -8 H${h} C${h + 2} 4 ${h - 4} 12 0 16 C${4 - h} 12 ${-h - 2} 4 ${-h} -8 Z`} fill="#3a76c8" />
      <path d={`M${-h} -10 L${1 - h} -15 Q${-h / 2} -11 0 -16 Q${h / 2} -11 ${h - 1} -15 L${h} -10 Z`} fill="#dc6560" />
      <rect x={-h} y="-10" width={h * 2} height="2" fill="#fff" />
      {name && <text y="8" textAnchor="middle" fontSize="19" fontWeight="700" fill="#fff">{name}</text>}
    </g>
  );
}

const stateRoutes = [["2", 446, 148], ["110", 908, 308], ["110", 1171, 62], ["60", 1133, 579], ["60", 1342, 530], ["60", 1631, 552]];

function StateRoute({ name, x, y }) {
  const h = name.length > 2 ? 20 : 16;
  return (
    <g transform={`translate(${x} ${y})`}>
      <rect x={-h} y="-13" width={h * 2} height="26" rx="12" fill="#fff" stroke="#5f6368" strokeWidth="2" />
      <text y="7" textAnchor="middle" fontSize="19" fill="#3c4043">{name}</text>
    </g>
  );
}

function UsRoute({ x, y }) {
  return (
    <g transform={`translate(${x} ${y})`}>
      <path
        d="M-16 -15 C-11 -11 -5 -12 0 -15 C5 -12 11 -11 16 -15 L20 -10 C16 -4 20 0 20 6 C20 12 15 13 9 13 C5 13 2 14 0 16 C-2 14 -5 13 -9 13 C-15 13 -20 12 -20 6 C-20 0 -16 -4 -20 -10 Z"
        fill="#fff"
        stroke="#5f6368"
        strokeWidth="2"
      />
      <text y="7" textAnchor="middle" fontSize="19" fill="#3c4043">101</text>
    </g>
  );
}

const range = (n) => Array.from({ length: n }, (_, i) => i);

function CityMap() {
  return (
    <MapCanvas viewBox="0 0 1760 800" preserveAspectRatio="xMidYMid slice" role="img" aria-label="Map of Los Angeles">
      <g fill="#f1f2f2">{hills.map((p) => <polygon key={p} points={p} />)}</g>
      <g fill="#c3f1d5">{parks.map((p) => <polygon key={p} points={p} />)}</g>
      <polygon points="882,206 893,186 898,190 898,206 888,218 880,216" fill="#f7f7f7" />
      <g fill="#f8eedb">{shops.map((p) => <polygon key={p} points={p} />)}</g>
      <g fill="#fde6e3">{blush.map((p) => <polygon key={p} points={p} />)}</g>
      <g fill="#90daee">{lakes.map((p) => <polygon key={p} points={p} />)}</g>
      <g fill="#d9dce0">{yards.map((p) => <polygon key={p} points={p} />)}</g>
      <g fill="none" stroke="#d6d9de" strokeWidth="3" strokeLinejoin="round">
        {rails.map((p) => <polyline key={p} points={p} />)}
      </g>
      <g fill="none" stroke="#dfe1e4" strokeWidth="8" strokeDasharray="2 22">
        {rails.map((p) => <polyline key={p} points={p} />)}
      </g>
      <g fill="none" stroke="#90daee" strokeLinejoin="round">
        <polyline points={river} strokeWidth="3" />
        <polyline points={lowerRiver} strokeWidth="5" />
        {creeks.map((p) => <polyline key={p} points={p} strokeWidth="2" />)}
      </g>
      <g fill="none" stroke="#d5dfe6" strokeWidth="2" strokeLinejoin="round">
        {minorRoads.map((p) => <polyline key={p} points={p} />)}
        {range(12).map((i) => (
          <polyline key={i} points="652,662 706,572 794,452 836,386" transform={`translate(${i * 9} ${i * 5})`} />
        ))}
        {range(11).map((i) => (
          <polyline key={i} points="715,500 800,560 880,612" transform={`translate(${i * 9} ${i * -15})`} />
        ))}
        {range(4).map((i) => (
          <line key={i} x1="690" y1="760" x2="770" y2="590" transform={`translate(${i * 24} ${i * 2})`} />
        ))}
      </g>
      <g fill="none" stroke="#d5dfe6" strokeWidth="4" strokeLinejoin="round">
        {majorRoads.map((p) => <polyline key={p} points={p} />)}
      </g>
      <g fill="#a3b4d4">
        {junctions.map(([x, y, r]) => (
          <path key={`${x}-${y}`} d={`M${x - r / 2} ${y} L${x - r / 3} ${y - r} H${x + r / 3} L${x + r / 2} ${y} L${x + r / 3} ${y + r} H${x - r / 3} Z`} />
        ))}
        <path d="M1393 532 L1408 546 L1424 534 L1430 520 L1434 548 Z" />
      </g>
      <g fill="none" strokeLinejoin="round">
        {motorways.map(({ w, p }) => <polyline key={p} points={p} stroke="#7489b8" strokeWidth={w} />)}
        {motorways.map(({ w, p }) => <polyline key={p} points={p} stroke="#a9b9d7" strokeWidth={w - 2} />)}
      </g>
      <g fill="none" stroke="#7489b8" strokeWidth="1">
        <polyline points="1239,383 1298,353 1334,352" />
        <polyline points="1298,349 1334,356 1352,352" />
      </g>
      {interstates.map(([n, x, y]) => <Interstate key={`${x}-${y}`} name={n} x={x} y={y} />)}
      <Interstate name="" x={1265} y={804} />
      {stateRoutes.map(([n, x, y]) => <StateRoute key={`${x}-${y}`} name={n} x={x} y={y} />)}
      <UsRoute x={804} y={311} />
      <UsRoute x={1070} y={596} />
      <g stroke="#fbfbfb" strokeWidth="5" strokeLinejoin="round" paintOrder="stroke">
        <text transform="translate(485 152) rotate(90)" fontSize="21" fill="#35435f">Western Ave</text>
        {labels.map(([kind, text, x, y, anchor = "middle"]) => {
          const s = labelStyles[kind];
          return (
            <text key={`${text}-${y}`} x={x} y={y} textAnchor={anchor} fontSize={s.size} fontWeight={s.weight} fill={s.fill} letterSpacing={s.spacing}>
              {text}
            </text>
          );
        })}
      </g>
      {pins.map(([k, x, y]) => <Pin key={`${x}-${y}`} kind={k} x={x} y={y} />)}
      <path d="M880 400 C876 384 868 376 861 367 C857 362 854 357 854 352 A26 26 0 0 1 906 352 C906 357 903 362 899 367 C892 376 884 384 880 400 Z" fill="#ea4335" stroke="#c5221f" strokeWidth="1" />
      <circle cx="880" cy="352" r="10" fill="#b31412" />
    </MapCanvas>
  );
}

const readings = [
  ["Status", "Cloudy"],
  ["Max Temperature", "62.6°F"],
  ["Min Temperature", "46.6°F"],
  ["Apparent Temperature", "62.6°F"],
  ["Sunrise Time", "07:00 AM"],
  ["Sunset Time", "07:02 PM"],
  ["Humidity", "88%"],
  ["Wind Speed", "11.00 mph"],
  ["Visibility", "9.94 mi"],
  ["Cloud Cover", "100%"],
];

export default function App() {
  return (
    <>
      <GlobalStyle />
      <Page>
        <Title>
          Weather Search
          <CloudSun />
        </Title>
        <Form onSubmit={(e) => e.preventDefault()}>
          <FieldRow $height="74px">
            <FieldLabel htmlFor="street">Street <Star>*</Star></FieldLabel>
            <StreetInput id="street" defaultValue="325 W. ADAMS BLVD" />
          </FieldRow>
          <FieldRow $height="80px">
            <FieldLabel htmlFor="city">City<Star>*</Star></FieldLabel>
            <Outline $width="100%"><OutlineInput id="city" defaultValue="LOS ANGELES" /></Outline>
          </FieldRow>
          <FieldRow $height="118px">
            <FieldLabel htmlFor="state">State <Star>*</Star></FieldLabel>
            <Outline $width="40%"><OutlineInput id="state" defaultValue="CALIFORNIA" /></Outline>
          </FieldRow>
          <Divider />
          <CenterRow $gap="16px" $after="32px">
            <FieldLabel as="span">Autodetect Location <Star>*</Star></FieldLabel>
            <Check type="checkbox" id="current" />
            <FieldLabel htmlFor="current">Current Location</FieldLabel>
          </CenterRow>
          <CenterRow $gap="16px" $after="32px">
            <Button type="submit" $tone="primary"><BsSearch size={32} />Search</Button>
            <Button type="reset" $tone="outline"><BsListNested size={32} />Clear</Button>
          </CenterRow>
        </Form>
        <CenterRow $gap="14px" $after="80px">
          <Button type="button" $tone="active">Results</Button>
          <Button type="button" $tone="link">Favorites</Button>
        </CenterRow>
        <DetailBar>
          <Button type="button" $tone="light"><BsChevronLeft size={32} />List</Button>
          <ShareLink href="#share" aria-label="Share on X"><BsTwitterX size={32} /></ShareLink>
        </DetailBar>
        <DateHeading>Monday 17 Mar 2025</DateHeading>
        <Table>
          <tbody>
            {readings.map(([name, value]) => (
              <tr key={name}>
                <th scope="row">{name}</th>
                <td>{value}</td>
              </tr>
            ))}
          </tbody>
        </Table>
        <MapFrame>
          <CityMap />
          <TypeSwitch>
            <TypeButton type="button" $on>Map</TypeButton>
            <TypeButton type="button">Satellite</TypeButton>
          </TypeSwitch>
          <MapButton type="button" $edge="top" $offset="20px" aria-label="Full screen">
            <svg width="36" height="36" viewBox="0 0 36 36" fill="none" stroke="#666" strokeWidth="4">
              <path d="M2 12 V2 H12 M24 2 H34 V12 M34 24 V34 H24 M12 34 H2 V24" />
            </svg>
          </MapButton>
          <MapButton type="button" $edge="bottom" $offset="192px" $round aria-label="Camera controls">
            <svg width="48" height="48" viewBox="0 0 48 48" fill="none" stroke="#666" strokeWidth="5">
              <path d="M17 11 L24 4 L31 11 M17 37 L24 44 L31 37 M11 17 L4 24 L11 31 M37 17 L44 24 L37 31" />
            </svg>
          </MapButton>
          <MapButton type="button" $edge="bottom" $offset="48px" aria-label="Street View">
            <svg width="40" height="62" viewBox="0 0 40 62" fill="#fbbc2d" stroke="#8a7650" strokeWidth="1.5">
              <path d="M10 21 H28 C33 22 34 28 36 42 L31 44 L28 32 V60 H20 V46 H18 V60 H10 V32 L8 44 L3 42 C5 28 5 22 10 21 Z" />
              <path d="M12 21 H27 L20 32 Z" fill="#e58a2f" stroke="none" />
              <circle cx="19" cy="11" r="10" />
            </svg>
          </MapButton>
          <GoogleMark href="#google">
            <MarkLetter $color="#4285f4">G</MarkLetter>
            <MarkLetter $color="#ea4335">o</MarkLetter>
            <MarkLetter $color="#fbbc04">o</MarkLetter>
            <MarkLetter $color="#4285f4">g</MarkLetter>
            <MarkLetter $color="#34a853">l</MarkLetter>
            <MarkLetter $color="#ea4335">e</MarkLetter>
          </GoogleMark>
          <Legal>
            <ShortcutButton type="button">Keyboard shortcuts</ShortcutButton>
            <span>Map data ©2025 Google</span>
            <LegalLink href="#terms">Terms</LegalLink>
            <LegalLink href="#report">Report a map error</LegalLink>
          </Legal>
        </MapFrame>
      </Page>
    </>
  );
}
